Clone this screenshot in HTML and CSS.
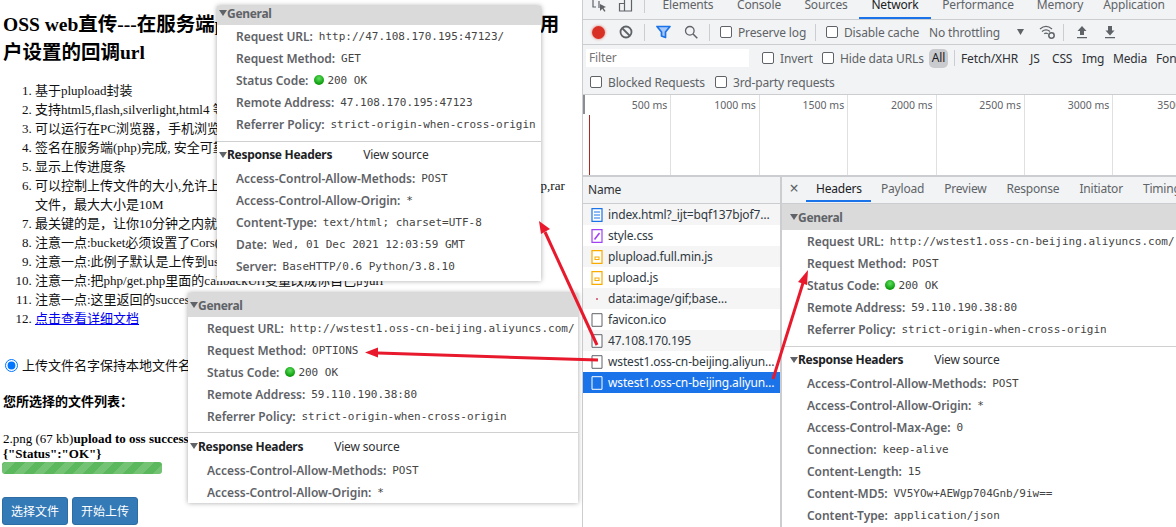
FILE: index.html
```html
<!DOCTYPE html>
<html lang="zh">
<head>
<meta charset="utf-8">
<title>OSS web直传</title>
<link rel="stylesheet" href="styles.css">
</head>
<body>
<div class="screen">
  <main class="page">
    <h2>OSS web直传---在服务端php签名，浏览器直传，上传后可回调用户设置的回调url</h2>
    <ol>
      <li>基于plupload封装</li>
      <li>支持html5,flash,silverlight,html4 等协议上传</li>
      <li>可以运行在PC浏览器，手机浏览器，微信</li>
      <li>签名在服务端(php)完成, 安全可靠</li>
      <li>显示上传进度条</li>
      <li>可以控制上传文件的大小,允许上传文件的类型,本例子设置了，只能上传jpg,png,gif,bmp,zip,rar<br>文件，最大大小是10M</li>
      <li>最关键的是，让你10分钟之内就能移植到你的系统，实现以上牛逼的功能！</li>
      <li>注意一点:bucket必须设置了Cors(Post打勾）,不然没有办法上传</li>
      <li>注意一点:此例子默认是上传到user-dir目录下面，这个目录的设置是在php/get.php</li>
      <li>注意一点:把php/get.php里面的callbackUrl变量改成你自己的url</li>
      <li>注意一点:这里返回的success，是所有的返回</li>
      <li><a href="#">点击查看详细文档</a></li>
    </ol>
    <label class="radio-row"><input type="radio" name="n" checked>上传文件名字保持本地文件名字</label>
    <h4>您所选择的文件列表：</h4>
    <div class="file">2.png (67 kb)<b>upload to oss success, object name:2.png 回调服务器返回的内容是:<br>{"Status":"OK"}</b></div>
    <div class="progress"></div>
    <div class="buttons"><a class="btn" href="#">选择文件</a><a class="btn" href="#">开始上传</a></div>
  </main>

  <section class="devtools">
    <nav class="tabs">
      <span class="top-ic ic-first"><svg width="16" height="12" viewBox="0 0 16 12"><path d="M1 0v7h3M7 1v7" fill="none" stroke="#5f6368" stroke-width="1.2"/><path d="M8 4l6 3-2.500 1 2 3-1.200.8-2-3L8 11z" fill="#5f6368"/></svg></span>
      <span class="top-ic"><svg width="16" height="12" viewBox="0 0 16 12"><path d="M1 3.500h5M1.500 3v8h12V0M6.500 0v11" fill="none" stroke="#5f6368" stroke-width="1.200"/></svg></span>
      <i class="tab-sep"></i>
      <span class="tab t-el">Elements</span>
      <span class="tab t-co">Console</span>
      <span class="tab t-so">Sources</span>
      <span class="tab t-ne active">Network</span>
      <span class="tab t-pe">Performance</span>
      <span class="tab t-me">Memory</span>
      <span class="tab t-ap">Application</span>
    </nav>

    <div class="bar bar-main">
      <span class="ic"><i class="rec"></i></span>
      <span class="ic"><svg width="14" height="14" viewBox="0 0 14 14"><circle cx="7" cy="7" r="5.500" fill="none" stroke="#5f6368" stroke-width="1.800"/><path d="M3 3l8 8" stroke="#5f6368" stroke-width="1.800"/></svg></span>
      <i class="sep"></i>
      <span class="ic"><svg width="15" height="14" viewBox="0 0 15 14"><path d="M1 1.500h13L9.500 7v5.500l-4-1.500V7z" fill="#a8c7fa" stroke="#1a73e8" stroke-width="1.700" stroke-linejoin="round"/></svg></span>
      <span class="ic"><svg width="14" height="14" viewBox="0 0 14 14"><circle cx="5.800" cy="5.800" r="4.300" fill="none" stroke="#5f6368" stroke-width="1.300"/><path d="M9 9l4.300 4.300" stroke="#5f6368" stroke-width="1.500"/></svg></span>
      <i class="sep"></i>
      <input class="cb cb-preserve" type="checkbox"><span class="txt w-preserve">Preserve log</span>
      <i class="sep"></i>
      <input class="cb cb-disable" type="checkbox"><span class="txt w-disable">Disable cache</span>
      <span class="txt w-throttle">No throttling</span>
      <svg class="caret" width="8" height="6" viewBox="0 0 8 6"><path d="M0 0h7L3.500 6z" fill="#5f6368"/></svg>
      <svg class="wifi" width="16" height="14" viewBox="0 0 16 14"><path d="M1 4c4-3.500 8-3.500 12 0M3 6.500c2.700-2.200 5.300-2.200 8 0M5.200 8.800c1.200-.9 2.400-.9 3.600 0" fill="none" stroke="#5f6368" stroke-width="1.300"/><circle cx="12.500" cy="10.500" r="2.700" fill="none" stroke="#5f6368" stroke-width="1.500"/></svg>
      <i class="sep sep-net"></i>
      <span class="ic"><svg width="12" height="14" viewBox="0 0 12 14"><path d="M6 1l4.500 5H8v4H4V6H1.500zM1 12h10v1.300H1z" fill="#5f6368"/></svg></span>
      <span class="ic"><svg width="12" height="14" viewBox="0 0 12 14"><path d="M4 1h4v4.500h2.500L6 10.500 1.500 5.500H4zM1 12h10v1.300H1z" fill="#5f6368"/></svg></span>
    </div>

    <div class="bar bar-filter">
      <span class="filter">Filter</span>
      <input class="cb cb-invert" type="checkbox"><span class="txt w-invert">Invert</span>
      <input class="cb" type="checkbox"><span class="txt w-hide">Hide data URLs</span>
      <span class="pill">All</span>
      <i class="sep sep-type"></i>
      <span class="type t-fetch">Fetch/XHR</span>
      <span class="type t-js">JS</span>
      <span class="type t-css">CSS</span>
      <span class="type t-img">Img</span>
      <span class="type t-media">Media</span>
      <span class="type">Font</span>
    </div>

    <div class="bar bar-blocked">
      <input class="cb" type="checkbox"><span class="txt w-blocked">Blocked Requests</span>
      <input class="cb" type="checkbox"><span class="txt">3rd-party requests</span>
    </div>

    <div class="timeline">
      <div class="tick"><span>500 ms</span></div>
      <div class="tick"><span>1000 ms</span></div>
      <div class="tick"><span>1500 ms</span></div>
      <div class="tick"><span>2000 ms</span></div>
      <div class="tick"><span>2500 ms</span></div>
      <div class="tick"><span>3000 ms</span></div>
      <div class="tick last"><span>3500 ms</span></div>
      <i class="grip"></i>
      <i class="load-line"></i>
    </div>

    <div class="split">
      <aside class="names">
        <div class="names-head">Name</div>
        <ul class="req-list">
          <li><svg class="ric" width="12" height="14" viewBox="0 0 12 14"><path d="M1 .7h10v12.600H1z" fill="#fff" stroke="#1a73e8" stroke-width="1.200"/><path d="M3 4h6M3 7h6M3 10h6" stroke="#1a73e8"/></svg><span>index.html?_ijt=bqf137bjof7…</span></li>
          <li><svg class="ric" width="12" height="14" viewBox="0 0 12 14"><path d="M1 .7h10v12.600H1z" fill="#fff" stroke="#a142f4" stroke-width="1.200"/><path d="M3.500 10.500L8.500 4" stroke="#a142f4" stroke-width="1.600"/></svg><span>style.css</span></li>
          <li><svg class="ric" width="12" height="14" viewBox="0 0 12 14"><path d="M1 .7h10v12.600H1z" fill="#fff" stroke="#f9ab00" stroke-width="1.200"/><rect x="4" y="7" width="4" height="2.500" fill="none" stroke="#f9ab00"/></svg><span>plupload.full.min.js</span></li>
          <li><svg class="ric" width="12" height="14" viewBox="0 0 12 14"><path d="M1 .7h10v12.600H1z" fill="#fff" stroke="#f9ab00" stroke-width="1.200"/><rect x="4" y="7" width="4" height="2.500" fill="none" stroke="#f9ab00"/></svg><span>upload.js</span></li>
          <li><svg class="ric" width="12" height="14" viewBox="0 0 12 14"><rect x="5" y="6" width="2" height="2" fill="#d9738a"/></svg><span>data:image/gif;base…</span></li>
          <li><svg class="ric" width="12" height="14" viewBox="0 0 12 14"><path d="M1 .7h10v12.600H1z" fill="#fff" stroke="#5f6368"/></svg><span>favicon.ico</span></li>
          <li><svg class="ric" width="12" height="14" viewBox="0 0 12 14"><path d="M1 .7h10v12.600H1z" fill="#fff" stroke="#5f6368"/></svg><span>47.108.170.195</span></li>
          <li><svg class="ric" width="12" height="14" viewBox="0 0 12 14"><path d="M1 .7h10v12.600H1z" fill="#fff" stroke="#5f6368"/></svg><span>wstest1.oss-cn-beijing.aliyun…</span></li>
          <li class="selected"><svg class="ric" width="12" height="14" viewBox="0 0 12 14"><path d="M1 .7h10v12.600H1z" fill="#1a73e8" stroke="#fff"/></svg><span>wstest1.oss-cn-beijing.aliyun…</span></li>
        </ul>
      </aside>

      <div class="details">
        <div class="detail-tabs">
          <span class="close">×</span>
          <span class="dtab active">Headers</span>
          <span class="dtab">Payload</span>
          <span class="dtab">Preview</span>
          <span class="dtab">Response</span>
          <span class="dtab">Initiator</span>
          <span class="dtab">Timing</span>
        </div>
        <div class="hdr hdr-dev">
          <div class="title general"><i class="tri"></i>General</div>
          <div class="row"><b>Request URL:</b><code>http://wstest1.oss-cn-beijing.aliyuncs.com/</code></div>
          <div class="row"><b>Request Method:</b><code>POST</code></div>
          <div class="row"><b>Status Code:</b><i class="dot"></i><code>200 OK</code></div>
          <div class="row"><b>Remote Address:</b><code>59.110.190.38:80</code></div>
          <div class="row"><b>Referrer Policy:</b><code>strict-origin-when-cross-origin</code></div>
          <hr>
          <div class="title resp"><i class="tri"></i>Response Headers<span class="vs">View source</span></div>
          <div class="row"><b>Access-Control-Allow-Methods:</b><code>POST</code></div>
          <div class="row"><b>Access-Control-Allow-Origin:</b><code>*</code></div>
          <div class="row"><b>Access-Control-Max-Age:</b><code>0</code></div>
          <div class="row"><b>Connection:</b><code>keep-alive</code></div>
          <div class="row"><b>Content-Length:</b><code>15</code></div>
          <div class="row"><b>Content-MD5:</b><code>VV5YOw+AEWgp704Gnb/9iw==</code></div>
          <div class="row"><b>Content-Type:</b><code>application/json</code></div>
        </div>
      </div>
    </div>
  </section>

  <div class="hdr shot shot-a">
    <div class="title general"><i class="tri"></i>General</div>
    <div class="row"><b>Request URL:</b><code>http://47.108.170.195:47123/</code></div>
    <div class="row"><b>Request Method:</b><code>GET</code></div>
    <div class="row"><b>Status Code:</b><i class="dot"></i><code>200 OK</code></div>
    <div class="row"><b>Remote Address:</b><code>47.108.170.195:47123</code></div>
    <div class="row"><b>Referrer Policy:</b><code>strict-origin-when-cross-origin</code></div>
    <hr>
    <div class="title resp"><i class="tri"></i>Response Headers<span class="vs">View source</span></div>
    <div class="row"><b>Access-Control-Allow-Methods:</b><code>POST</code></div>
    <div class="row"><b>Access-Control-Allow-Origin:</b><code>*</code></div>
    <div class="row"><b>Content-Type:</b><code>text/html; charset=UTF-8</code></div>
    <div class="row"><b>Date:</b><code>Wed, 01 Dec 2021 12:03:59 GMT</code></div>
    <div class="row"><b>Server:</b><code>BaseHTTP/0.6 Python/3.8.10</code></div>
  </div>

  <div class="hdr shot shot-b">
    <div class="title general"><i class="tri"></i>General</div>
    <div class="row"><b>Request URL:</b><code>http://wstest1.oss-cn-beijing.aliyuncs.com/</code></div>
    <div class="row"><b>Request Method:</b><code>OPTIONS</code></div>
    <div class="row"><b>Status Code:</b><i class="dot"></i><code>200 OK</code></div>
    <div class="row"><b>Remote Address:</b><code>59.110.190.38:80</code></div>
    <div class="row"><b>Referrer Policy:</b><code>strict-origin-when-cross-origin</code></div>
    <hr>
    <div class="title resp"><i class="tri"></i>Response Headers<span class="vs">View source</span></div>
    <div class="row"><b>Access-Control-Allow-Methods:</b><code>POST</code></div>
    <div class="row"><b>Access-Control-Allow-Origin:</b><code>*</code></div>
  </div>

  <svg class="arrows" width="1176" height="527" viewBox="0 0 1176 527">
    <g fill="none" stroke="#e8192c" stroke-width="3">
      <path d="M597 345L545 232"/>
      <path d="M598 360L378 353"/>
      <path d="M773 379L803 283"/>
    </g>
    <g fill="#e8192c">
      <path d="M539 221l11 8-9 5z"/>
      <path d="M365 352.500l13-5 0 10z"/>
      <path d="M808 270l-1 15-9-3z"/>
    </g>
  </svg>
</div>
</body>
</html>
```
FILE: styles.css
```css
* { box-sizing: border-box; }
html, body { margin: 0; padding: 0; height: 527px; overflow: hidden; background: #fff; }
ul, ol { margin: 0; padding: 0; }

.screen { position: relative; display: flex; width: 1176px; height: 527px; overflow: hidden; }

/* left web page */
.page {
  width: 582px; flex: none; padding: 11px 9px 0 3px;
  font: 13px/19px "Liberation Serif", "Noto Sans CJK SC", serif; color: #111;
}
.page h2 { margin: 0; font-size: 19.5px; line-height: 28px; font-weight: bold; color: #000; }
.page ol { margin: 14px 0 0; padding-left: 32px; }
.page a { color: #00e; }
.radio-row { display: flex; align-items: center; margin: 28px 0 0 0; padding-left: 1px; height: 19px; white-space: nowrap; }
.radio-row input { margin: 0 4px 0 1px; width: 13px; height: 13px; }
.page h4 { margin: 17px 0 0; font-size: 13px; line-height: 19px; font-weight: bold; color: #000; }
.file { margin-top: 20px; line-height: 15px; color: #000; white-space: nowrap; overflow: hidden; }
.progress {
  width: 160px; height: 12px; margin: 1px 0 0 -1px; border-radius: 3px; background-color: #5cb85c;
  background-image: repeating-linear-gradient(-45deg, rgba(255,255,255,.15) 0 7px, transparent 7px 14px);
}
.buttons { display: flex; gap: 4px; margin: 23px 0 0 -1px; }
.btn {
  display: block; width: 66px; height: 28px; border-radius: 3px; background: #337ab7; border: 1px solid #2e6da4;
  font: 12px/26px "Noto Sans CJK SC", sans-serif; text-align: center; color: #fff !important; text-decoration: none;
}

/* devtools */
.devtools {
  flex: none; width: 594px; height: 527px; display: flex; flex-direction: column;
  border-left: 1px solid #cbcdd1; overflow: hidden; background: #f1f3f4;
  font: 12px "Noto Sans", sans-serif; color: #5f6368; letter-spacing: -.15px;
}
.tabs { display: flex; height: 20px; flex: none; border-bottom: 1px solid #cbcdd1; line-height: 10px; white-space: nowrap; padding-left: 9px; }
.top-ic { width: 16px; height: 12px; flex: none; margin-right: 10px; }
.tab-sep { width: 1px; height: 13px; background: #cbcdd1; flex: none; }
.tab { display: block; text-align: center; flex: none; }
.t-el { width: 74px; margin-left: 6px; }
.t-co { width: 68px; }
.t-so { width: 66px; }
.t-ne { width: 72px; }
.t-pe { width: 94px; }
.t-me { width: 70px; }
.t-ap { width: 78px; }
.tab.active { color: #202124; box-shadow: inset 0 -2px #1a73e8; height: 19px; }

.bar { display: flex; align-items: center; flex: none; white-space: nowrap; }
.bar-main { height: 25px; padding-left: 1px; border-bottom: 1px solid #cbcdd1; }
.ic { width: 28px; height: 24px; flex: none; display: flex; align-items: center; justify-content: center; }
.rec { width: 13px; height: 13px; border-radius: 50%; background: #d93025; box-shadow: 0 0 2px 1px rgba(217,48,37,.3); }
.sep { width: 1px; height: 17px; flex: none; margin: 0 4px; background: #cbcdd1; }
.cb {
  appearance: none; -webkit-appearance: none; width: 12px; height: 12px; margin: 0 6px 0 0; flex: none;
  border: 1px solid #5f6368; border-radius: 2px; background: #fff;
}
.cb-preserve { margin-left: 6px; }
.cb-disable { margin-left: 6px; }
.txt { display: block; flex: none; }
.w-preserve { width: 73px; }
.w-disable { width: 85px; }
.w-throttle { width: 88px; }
.caret { flex: none; margin-right: 14px; }
.wifi { flex: none; margin-right: 3px; }
.sep-net { margin: 0 4px 0 5px; }

.bar-filter { height: 27px; padding: 0 0 1px 3px; color: #202124; }
.bar-filter .txt { color: #5f6368; }
.filter { width: 163px; height: 18px; flex: none; margin-right: 13px; padding-left: 3px; background: #fff; line-height: 18px; color: #757575; }
.cb-invert { margin-left: 0; }
.w-invert { width: 42px; }
.w-hide { width: 89px; }
.pill { width: 19px; height: 19px; flex: none; border-radius: 5px; background: #c9cbce; text-align: center; line-height: 18px; color: #202124; }
.sep-type { height: 16px; margin: 0 6px; }
.type { display: block; flex: none; color: #303134; }
.t-fetch { width: 69px; }
.t-js { width: 22px; }
.t-css { width: 30px; }
.t-img { width: 31px; }
.t-media { width: 43px; }

.bar-blocked { height: 22px; padding: 0 0 2px 7px; color: #5f6368; }
.w-blocked { width: 107px; }

.timeline {
  position: relative; flex: none; display: flex; height: 83px; background: #fff;
  border-top: 1px solid #cbcdd1; border-bottom: 2px solid #cbcdd1;
}
.tick { flex: none; width: 88.4px; padding: 3px 3px 0 0; border-right: 1px solid #e0e0e0; text-align: right; font-size: 10.5px; line-height: 14px; letter-spacing: 0; white-space: nowrap; }
.tick.last { border: 0; }
.grip { position: absolute; left: 0; top: 0; width: 2px; height: 19px; background: #8a8d91; }
.load-line { position: absolute; left: 6px; top: 20px; width: 1px; height: 60px; background: #b3261e; }

.split { display: flex; flex: 1; min-height: 0; background: #fff; }
.names { width: 199px; flex: none; border-right: 2px solid #cbcdd1; color: #303942; }
.names-head { height: 27px; padding-left: 5px; line-height: 26px; background: #f1f3f4; border-bottom: 1px solid #cbcdd1; color: #303134; }
.req-list { list-style: none; }
.req-list li { display: flex; align-items: center; height: 21px; padding-left: 8px; white-space: nowrap; overflow: hidden; background: #fff; }
.req-list li:nth-child(odd) { background: #f5f5f5; }
.req-list li.selected { background: #1a73e8; color: #fff; }
.ric { flex: none; margin-right: 5px; }

.details { flex: 1; min-width: 0; overflow: hidden; }
.detail-tabs { display: flex; height: 27px; background: #f1f3f4; border-bottom: 1px solid #cbcdd1; line-height: 23px; white-space: nowrap; letter-spacing: -.2px; }
.close { width: 24px; flex: none; text-align: center; font-size: 16px; }
.dtab { flex: none; padding: 0 10px; height: 25px; }
.dtab.active { width: 65px; color: #202124; box-shadow: inset 0 -2px #1a73e8; }

/* header sections, shared by the panel and the pasted screenshots */
.hdr { background: #fff; font: 12px "Noto Sans", sans-serif; color: #5f6368; letter-spacing: -.15px; }
.hdr .title { display: flex; align-items: center; font-weight: 700; white-space: nowrap; letter-spacing: -.3px; }
.hdr .general { background: #dadada; padding-left: 2px; }
.hdr .resp { height: 26px; padding-left: 2px; color: #202124; }
.tri { width: 0; height: 0; border: 4px solid transparent; border-top: 6px solid #5f6368; border-bottom: 0; flex: none; }
.vs { margin-left: 31px; font-weight: 400; letter-spacing: -.15px; color: #303134; }
.hdr hr { margin: 5px 0 0; border: 0; border-top: 1px solid #d0d0d0; }
.row { display: flex; align-items: center; height: 22px; padding-left: 19px; white-space: nowrap; }
.row b { font-weight: 600; margin-right: 6px; letter-spacing: -.05px; }
.row code { font: 11px "DejaVu Sans Mono", monospace; letter-spacing: 0; color: #444; }
.dot { width: 10px; height: 10px; margin-right: 3px; flex: none; border-radius: 50%; background: radial-gradient(circle at 50% 35%, #5fe05f, #0a9a0a 70%); }

.hdr-dev { padding-left: 6px; }
.hdr-dev .general { height: 26px; margin-left: -6px; padding-left: 8px; }
.hdr-dev hr { margin: 6px 0 0 -6px; }
.hdr-dev .resp { height: 25px; }

.shot { position: absolute; box-shadow: 0 0 5px rgba(0,0,0,.35); overflow: hidden; }
.shot-a { left: 217px; top: 6px; width: 324px; height: 275px; }
.shot-a .general { height: 19px; padding-bottom: 5px; }
.shot-a hr { margin-top: 6px; }
.shot-a .resp { height: 25px; }
.shot-b { left: 188px; top: 293px; width: 390px; height: 210px; }
.shot-b .general { height: 24px; }

.arrows { position: absolute; left: 0; top: 0; pointer-events: none; }
```
